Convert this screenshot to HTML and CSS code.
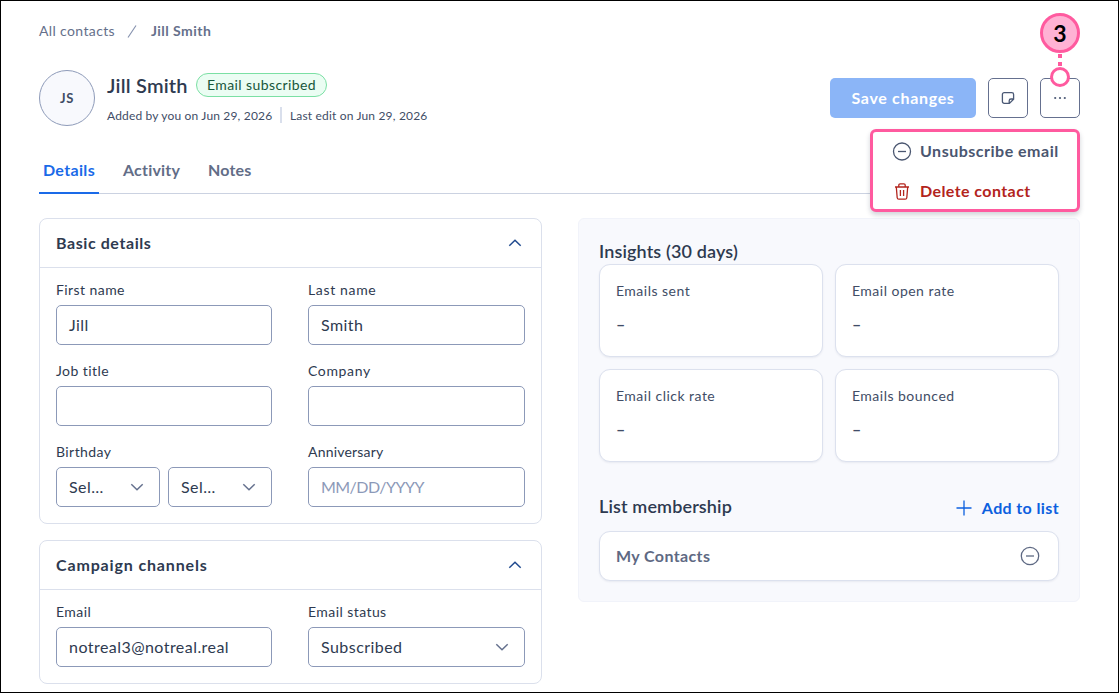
FILE: index.html
```html
<!DOCTYPE html>
<html lang="en">
<head>
<meta charset="utf-8">
<title>Jill Smith</title>
<link rel="stylesheet" href="styles.css">
</head>
<body>
<div class="page">
  <nav class="breadcrumb">
    <span class="crumb">All contacts</span>
    <svg class="slash" width="10" height="14" viewBox="0 0 10 14"><path d="M9 1.500L1 13.500"/></svg>
    <span class="crumb-current">Jill Smith</span>
  </nav>

  <header class="header">
    <div class="avatar">JS</div>
    <div class="identity">
      <div class="name-row">
        <h1 class="name">Jill Smith</h1>
        <span class="status"><span class="status-text">Email subscribed</span></span>
      </div>
      <div class="meta">
        <span class="added">Added by you on Jun 29, 2026</span>
        <span class="divider"></span>
        <span class="edited">Last edit on Jun 29, 2026</span>
      </div>
    </div>
    <div class="actions">
      <button class="save">Save changes</button>
      <button class="icon-btn"><svg width="14" height="14" viewBox="0 0 14 14"><path d="M3.200 1.600h7.600a1.800 1.800 0 0 1 1.800 1.800v4.800l-4.200 4.200H3.200a1.800 1.800 0 0 1-1.800-1.800V3.400a1.800 1.800 0 0 1 1.800-1.800zM8.200 12.200v-2.400a1.800 1.800 0 0 1 1.800-1.800h2.400"/></svg></button>
      <div class="more">
        <button class="icon-btn"><svg class="dots" width="14" height="14" viewBox="0 0 14 14"><circle cx="2.200" cy="7" r="1.100"/><circle cx="7" cy="7" r="1.100"/><circle cx="11.800" cy="7" r="1.100"/></svg></button>
        <div class="marker">
          <span class="marker-number">3</span>
          <span class="marker-dash"></span>
          <span class="marker-dash"></span>
          <span class="marker-ring"></span>
        </div>
        <div class="menu">
          <div class="menu-item unsubscribe">
            <svg width="20" height="20" viewBox="0 0 20 20"><circle cx="10" cy="9.500" r="8.500"/><path d="M6 9.500h8"/></svg>
            <span class="menu-unsub">Unsubscribe email</span>
          </div>
          <div class="menu-item delete">
            <svg width="20" height="20" viewBox="0 0 20 20"><path d="M3 5h14M6.800 5V3.100c0-.9.500-1.300 1.300-1.300h3.800c.8 0 1.300.4 1.300 1.300V5M4.300 5l.9 10.700c.1 1 .7 1.500 1.600 1.500h6.400c.9 0 1.500-.5 1.600-1.500L15.700 5M8.400 7.900v6.200M11.600 7.900v6.200"/></svg>
            <span class="menu-delete">Delete contact</span>
          </div>
        </div>
      </div>
    </div>
  </header>

  <div class="tabs">
    <span class="tab active">Details</span>
    <span class="tab activity">Activity</span>
    <span class="tab notes">Notes</span>
  </div>

  <main class="columns">
    <div class="left">
      <section class="card">
        <div class="card-head">
          <h2 class="card-title">Basic details</h2>
          <svg class="chevron-up" width="14" height="8" viewBox="0 0 14 8"><path d="M1.300 6.800L7 1.300l5.700 5.500"/></svg>
        </div>
        <div class="fields">
          <div class="field"><label class="label">First name</label><div class="input">Jill</div></div>
          <div class="field"><label class="label last">Last name</label><div class="input">Smith</div></div>
          <div class="field"><label class="label">Job title</label><div class="input"></div></div>
          <div class="field"><label class="label last">Company</label><div class="input"></div></div>
          <div class="field">
            <label class="label">Birthday</label>
            <div class="selects">
              <div class="input select"><span>Sel…</span><svg class="chevron-down" width="14" height="8" viewBox="0 0 14 8"><path d="M1.300 1.200L7 6.700l5.700-5.500"/></svg></div>
              <div class="input select"><span>Sel…</span><svg class="chevron-down" width="14" height="8" viewBox="0 0 14 8"><path d="M1.300 1.200L7 6.700l5.700-5.500"/></svg></div>
            </div>
          </div>
          <div class="field"><label class="label anniversary">Anniversary</label><div class="input placeholder">MM/DD/YYYY</div></div>
        </div>
      </section>

      <section class="card">
        <div class="card-head">
          <h2 class="card-title campaign">Campaign channels</h2>
          <svg class="chevron-up" width="14" height="8" viewBox="0 0 14 8"><path d="M1.300 6.800L7 1.300l5.700 5.500"/></svg>
        </div>
        <div class="fields">
          <div class="field"><label class="label">Email</label><div class="input address">notreal3@notreal.real</div></div>
          <div class="field"><label class="label">Email status</label><div class="input select"><span>Subscribed</span><svg class="chevron-down" width="14" height="8" viewBox="0 0 14 8"><path d="M1.300 1.200L7 6.700l5.700-5.500"/></svg></div></div>
        </div>
      </section>
    </div>

    <aside class="panel">
      <h2 class="panel-title insights-title">Insights (30 days)</h2>
      <div class="stats">
        <div class="stat"><div class="stat-label">Emails sent</div><div class="stat-value">–</div></div>
        <div class="stat"><div class="stat-label">Email open rate</div><div class="stat-value">–</div></div>
        <div class="stat"><div class="stat-label">Email click rate</div><div class="stat-value">–</div></div>
        <div class="stat"><div class="stat-label">Emails bounced</div><div class="stat-value">–</div></div>
      </div>
      <div class="list-head">
        <h2 class="panel-title list-title">List membership</h2>
        <div class="add"><svg width="16" height="16" viewBox="0 0 16 16"><path d="M8 .5v15M.5 8h15"/></svg><span class="add-text">Add to list</span></div>
      </div>
      <div class="member">
        <span class="member-name">My Contacts</span>
        <svg width="20" height="20" viewBox="0 0 20 20"><circle cx="10" cy="10" r="8.700"/><path d="M6 10h8"/></svg>
      </div>
    </aside>
  </main>
</div>
</body>
</html>
```

FILE: styles.css
```css
* { box-sizing: border-box; }
body { margin: 0; background: #fff; color: #2e3a50; font-family: Lato, "Open Sans", sans-serif; font-size: 15px; }
h1, h2 { margin: 0; }
svg { display: block; flex: none; fill: none; stroke: currentColor; stroke-width: 1.3; }
button { font-family: inherit; padding: 0; }

.page { width: 1119px; height: 693px; border: 1px solid #000; padding: 20px 38px 0; overflow: hidden; }

.breadcrumb { display: flex; align-items: center; height: 20px; color: #65708b; font-size: 14px; }
.crumb { width: 88px; padding-bottom: 2px; letter-spacing: .37px; white-space: nowrap; }
.slash { color: #8390ad; stroke-width: 1.1; }
.crumb-current { margin-left: 14px; padding-bottom: 2px; font-weight: 700; letter-spacing: .45px; }

.header { display: flex; height: 56px; margin-top: 29px; }
.avatar { width: 56px; height: 56px; border: 1px solid #8e9bb9; border-radius: 50%; background: #f8f9fd; color: #414d66; display: flex; align-items: center; justify-content: center; font-size: 13px; font-weight: 700; letter-spacing: .6px; }
.identity { margin-left: 12px; padding-top: 3px; }
.name-row { display: flex; align-items: center; height: 24px; gap: 7px; }
.name { width: 82px; font-size: 20px; line-height: 24px; font-weight: 600; white-space: nowrap; letter-spacing: .2px; }
.status { width: 131px; height: 24px; padding-bottom: 2px; border: 1px solid #7be0a4; border-radius: 12px; background: #ebfdf3; color: #17573b; display: flex; align-items: center; justify-content: center; white-space: nowrap; }
.status-text { font-size: 14px; letter-spacing: .4px; }
.meta { display: flex; align-items: center; height: 16px; margin-top: 10px; font-size: 12px; color: #414d66; white-space: nowrap; letter-spacing: .17px; }
.added { width: 173px; }
.divider { width: 2px; height: 16px; background: #d9dfec; }
.edited { margin-left: 8px; }

.actions { margin: 8px 0 0 auto; display: flex; gap: 12px; align-items: flex-start; }
.save { width: 146px; height: 40px; padding-bottom: 2px; border: 0; border-radius: 5px; background: #8bb5f7; color: #fff; font-size: 16px; font-weight: 700; letter-spacing: .68px; }
.icon-btn { width: 40px; height: 40px; border: 1px solid #65708f; border-radius: 5px; background: #fff; color: #4b5975; display: flex; align-items: center; justify-content: center; }
.dots { fill: currentColor; stroke: none; }
.more { position: relative; }

.marker { position: absolute; left: 0; top: -65px; width: 40px; display: flex; flex-direction: column; align-items: center; }
.marker-number { width: 40px; height: 40px; border: 3px solid #ff5a9f; border-radius: 50%; background: #ffb2d4; color: #000; font-size: 23px; line-height: 34px; text-align: center; font-weight: 700; }
.marker-dash { width: 4px; height: 4px; margin: 1px 0 3px; background: #ff5a9f; }
.marker-ring { width: 20px; height: 20px; margin-top: -2px; border: 3px solid #ff5a9f; border-radius: 50%; background: #fff; }

.menu { position: absolute; right: 0; top: 51px; z-index: 1; width: 210px; height: 83px; padding: 0 0 0 19px; border: 3px solid #ff5a9f; border-radius: 6px; background: #fff; box-shadow: 0 3px 5px rgba(30, 40, 65, .2); font-size: 16px; font-weight: 700; white-space: nowrap; }
.menu-item { display: flex; align-items: center; gap: 8px; height: 40px; }
.menu-unsub { padding-bottom: 3px; letter-spacing: .5px; }
.menu-delete { padding-bottom: 3px; letter-spacing: .42px; }
.unsubscribe { color: #4a5670; }
.delete { color: #b3241d; }

.tabs { display: flex; height: 47px; margin-top: 21px; border-bottom: 1px solid #cbd2e1; font-weight: 700; font-size: 16px; color: #626d87; letter-spacing: .2px; }
.tab { height: 47px; line-height: 46px; white-space: nowrap; }
.tab.active { width: 60px; text-align: center; color: #1a6ae8; border-bottom: 2px solid #1a6ae8; letter-spacing: .35px; }
.activity { margin-left: 24px; width: 85px; }

.columns { display: grid; grid-template-columns: 503px 502px; gap: 36px; align-items: start; margin-top: 24px; }
.left { display: flex; flex-direction: column; gap: 16px; }
.card { border: 1px solid #dbe0ec; border-radius: 8px; }
.card-head { display: flex; align-items: center; justify-content: space-between; height: 49px; padding: 0 19px 0 16px; border-bottom: 1px solid #dbe0ec; }
.card-title { padding-bottom: 2px; font-size: 16px; font-weight: 700; letter-spacing: .58px; }
.campaign { letter-spacing: .85px; }
.chevron-up { color: #214b8f; stroke-width: 1.5; }
.chevron-down { color: #65718e; stroke-width: 1.5; }
.fields { display: grid; grid-template-columns: 216px 217px; gap: 16px 36px; padding: 12px 16px 16px; }
.field { display: flex; flex-direction: column; gap: 4px; min-width: 0; }
.label { height: 21px; line-height: 19px; font-size: 14px; letter-spacing: .43px; }
.label.last { letter-spacing: .65px; }
.label.anniversary { letter-spacing: .2px; }
.input { height: 40px; padding: 0 12px 2px; border: 1px solid #8c99b8; border-radius: 5px; display: flex; align-items: center; font-size: 16px; letter-spacing: .45px; white-space: nowrap; }
.select { justify-content: space-between; padding-right: 15px; }
.select svg { margin-top: 1px; }
.selects { display: grid; grid-template-columns: 1fr 1fr; gap: 8px; }
.placeholder { color: #8c99b8; letter-spacing: -.55px; }

.panel { height: 384px; padding: 20px 20px 0; border: 1px solid #f1f3fa; border-radius: 6px; background: #f8f9fd; }
.panel-title { font-size: 18px; font-weight: 600; line-height: 24px; letter-spacing: .13px; }
.insights-title { height: 25px; }
.stats { display: grid; grid-template-columns: 224px 224px; gap: 12px; }
.stat { height: 93px; padding: 16px; border: 1px solid #dce1ee; border-radius: 11px; background: #fff; box-shadow: 0 1px 2px rgba(50, 65, 100, .08); color: #414d66; }
.stat-label { font-size: 14px; line-height: 20px; letter-spacing: .48px; }
.stat-value { margin-top: 12px; font-size: 16px; line-height: 22px; font-weight: 700; }
.list-head { display: flex; justify-content: space-between; height: 24px; margin-top: 32px; }
.add { display: flex; align-items: center; gap: 10px; height: 26px; color: #0c60df; font-size: 16px; font-weight: 700; }
.add svg { margin-top: 2px; }
.add-text { letter-spacing: .38px; }
.member { display: flex; align-items: center; justify-content: space-between; height: 50px; margin-top: 13px; padding: 0 18px 0 16px; border: 1px solid #dce1ee; border-radius: 11px; background: #fff; box-shadow: 0 1px 2px rgba(50, 65, 100, .08); color: #5e6983; font-size: 16px; font-weight: 700; }
.member-name { padding-bottom: 2px; letter-spacing: .38px; }
```
